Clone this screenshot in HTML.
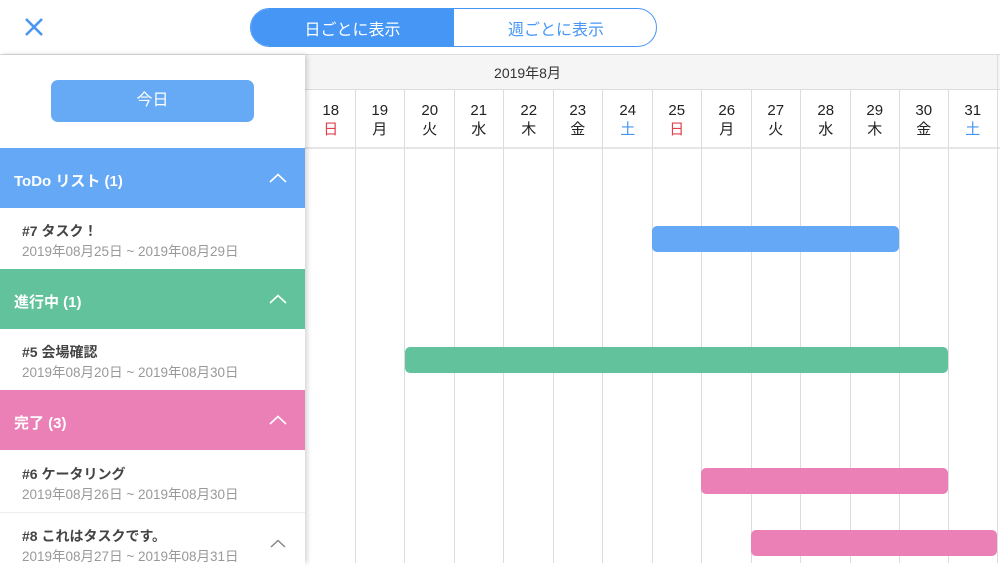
<!DOCTYPE html><html><head><meta charset="utf-8"><style>
*{margin:0;padding:0;box-sizing:border-box}
body{width:1000px;height:563px;overflow:hidden;background:#fff;font-family:"Liberation Sans","Noto Sans CJK JP",sans-serif;position:relative}
.a{position:absolute}
.vl{position:absolute;top:90px;bottom:0;width:1px;background:#dcdcdc}
.day{position:absolute;top:101px;width:49.5px;text-align:center;font-size:15px;line-height:19px;color:#222}
.hdr{position:absolute;left:0;width:305px;height:60px;color:#fff;font-size:15px;font-weight:bold;padding-left:14px;line-height:67px}
.hdr svg{position:absolute;right:18px;top:25px}
.it{position:absolute;left:0;width:305px;height:61px;background:#fff;padding-left:22px}
.it b{display:block;margin-top:14px;font-size:14px;color:#444;line-height:18px}
.it span{display:block;font-size:13.5px;color:#999;line-height:17px;margin-top:3px}
.bar{position:absolute;height:26px;border-radius:5px}
.seg{position:absolute;top:0;height:100%;display:flex;align-items:center;justify-content:center;font-size:16px}
</style></head><body>
<svg class="a" style="left:23px;top:16px" width="22" height="22" viewBox="0 0 22 22"><path d="M3 3L19 19M19 3L3 19" stroke="#4a96f2" stroke-width="2.6" fill="none"/></svg>
<div class="a" style="left:250px;top:8px;width:407px;height:39px;border:1.5px solid #4596f5;border-radius:20px;overflow:hidden">
<div class="seg" style="left:0;width:203px;background:#4596f5;color:#fff">日ごとに表示</div>
<div class="seg" style="left:203px;width:204px;color:#4596f5">週ごとに表示</div></div>
<div class="a" style="left:0;top:54px;width:1000px;height:1px;background:#ddd"></div>
<div class="a" style="left:305px;top:55px;width:695px;height:35px;background:#f5f5f5;border-bottom:1px solid #dcdcdc"></div>
<div class="a" style="left:305px;top:55px;width:695px;text-align:center;line-height:36px;font-size:14px;color:#333;padding-right:250px">2019年8月</div>
<div class="a" style="left:997px;top:55px;width:1px;height:35px;background:#dcdcdc"></div>
<div class="a" style="left:305px;top:147px;width:695px;height:2px;background:#e6e6e6"></div>
<div class="vl" style="left:355px"></div><div class="vl" style="left:404px"></div><div class="vl" style="left:454px"></div><div class="vl" style="left:503px"></div><div class="vl" style="left:553px"></div><div class="vl" style="left:602px"></div><div class="vl" style="left:652px"></div><div class="vl" style="left:701px"></div><div class="vl" style="left:751px"></div><div class="vl" style="left:800px"></div><div class="vl" style="left:850px"></div><div class="vl" style="left:899px"></div><div class="vl" style="left:948px"></div><div class="vl" style="left:997px"></div>
<div class="day" style="left:306px">18<br><span style="color:#e2404f">日</span></div>
<div class="day" style="left:355px">19<br>月</div>
<div class="day" style="left:405px">20<br>火</div>
<div class="day" style="left:454px">21<br>水</div>
<div class="day" style="left:504px">22<br>木</div>
<div class="day" style="left:553px">23<br>金</div>
<div class="day" style="left:603px">24<br><span style="color:#4596f5">土</span></div>
<div class="day" style="left:652px">25<br><span style="color:#e2404f">日</span></div>
<div class="day" style="left:702px">26<br>月</div>
<div class="day" style="left:751px">27<br>火</div>
<div class="day" style="left:801px">28<br>水</div>
<div class="day" style="left:850px">29<br>木</div>
<div class="day" style="left:899px">30<br>金</div>
<div class="day" style="left:948px">31<br><span style="color:#4596f5">土</span></div>
<div class="bar" style="left:652px;top:226px;width:247px;background:#64a8f6"></div>
<div class="bar" style="left:405px;top:347px;width:543px;background:#62c29c"></div>
<div class="bar" style="left:701px;top:468px;width:247px;background:#eb80b6"></div>
<div class="bar" style="left:751px;top:530px;width:246px;background:#eb80b6"></div>
<div class="a" style="left:0;top:55px;width:305px;height:508px;background:#fff;box-shadow:2px 0 5px rgba(0,0,0,.18)"></div>
<div class="a" style="left:51px;top:80px;width:203px;height:42px;background:#66aaf5;border-radius:7px;color:#fff;text-align:center;line-height:42px;font-size:16px">今日</div>
<div class="hdr" style="top:148px;background:#64a8f6">ToDo リスト (1)<svg width="18" height="10" viewBox="0 0 18 10"><path d="M1 9L9 1.5L17 9" stroke="#fff" stroke-width="1.6" fill="none"/></svg></div>
<div class="it" style="top:208px"><b>#7 タスク！</b><span>2019年08月25日 ~ 2019年08月29日</span></div>
<div class="hdr" style="top:269px;background:#62c29c">進行中 (1)<svg width="18" height="10" viewBox="0 0 18 10"><path d="M1 9L9 1.5L17 9" stroke="#fff" stroke-width="1.6" fill="none"/></svg></div>
<div class="it" style="top:329px"><b>#5 会場確認</b><span>2019年08月20日 ~ 2019年08月30日</span></div>
<div class="hdr" style="top:390px;background:#eb80b6">完了 (3)<svg width="18" height="10" viewBox="0 0 18 10"><path d="M1 9L9 1.5L17 9" stroke="#fff" stroke-width="1.6" fill="none"/></svg></div>
<div class="it" style="top:451px"><b>#6 ケータリング</b><span>2019年08月26日 ~ 2019年08月30日</span></div>
<div class="a" style="left:0;top:512px;width:305px;height:1px;background:#eee"></div>
<div class="it" style="top:513px"><b>#8 これはタスクです。</b><span>2019年08月27日 ~ 2019年08月31日</span></div>
<svg class="a" style="left:270px;top:539px" width="16" height="9" viewBox="0 0 16 9"><path d="M1 8L8 1.5L15 8" stroke="#888" stroke-width="1.5" fill="none"/></svg>
</body></html>
